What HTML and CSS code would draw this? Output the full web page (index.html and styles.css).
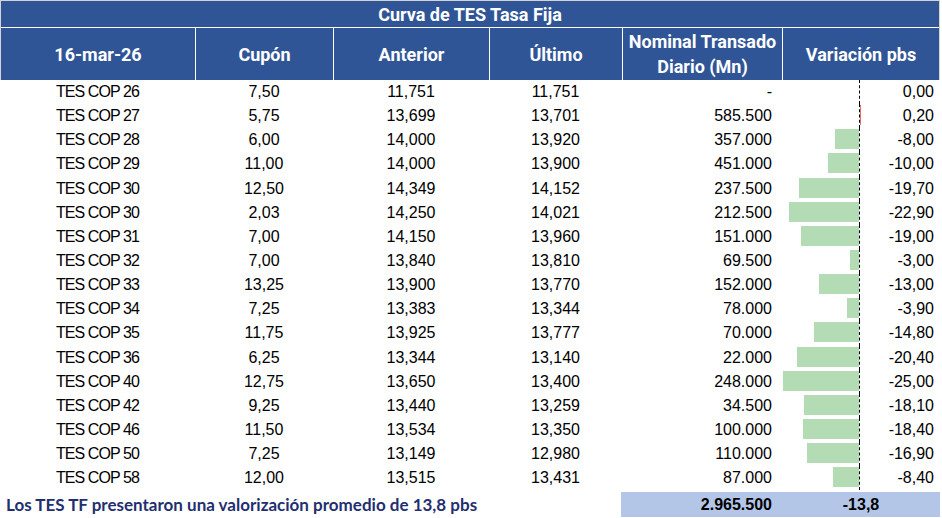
FILE: index.html
```html
<!DOCTYPE html>
<html lang="es">
<head>
<meta charset="utf-8">
<title>Curva de TES Tasa Fija</title>
<link rel="stylesheet" href="styles.css">
</head>
<body>
<div class="sheet">
  <div class="head-box">
    <div class="title">Curva de TES Tasa Fija</div>
    <div class="head">
      <div class="h">16-mar-26</div>
      <div class="h">Cupón</div>
      <div class="h">Anterior</div>
      <div class="h">Último</div>
      <div class="h two">Nominal Transado<br>Diario (Mn)</div>
      <div class="h">Variación pbs</div>
    </div>
  </div>
  <div class="rows">
    <div class="row"><div class="c name">TES COP 26</div><div class="c">7,50</div><div class="c">11,751</div><div class="c">11,751</div><div class="c num">-</div><div class="c var"><div class="neg"></div><div class="pos"></div><span class="v">0,00</span></div></div>
    <div class="row"><div class="c name">TES COP 27</div><div class="c">5,75</div><div class="c">13,699</div><div class="c">13,701</div><div class="c num">585.500</div><div class="c var"><div class="neg"></div><div class="pos"><div class="bar up" style="width:1px"></div></div><span class="v">0,20</span></div></div>
    <div class="row"><div class="c name">TES COP 28</div><div class="c">6,00</div><div class="c">14,000</div><div class="c">13,920</div><div class="c num">357.000</div><div class="c var"><div class="neg"><div class="bar" style="width:24px"></div></div><div class="pos"></div><span class="v">-8,00</span></div></div>
    <div class="row"><div class="c name">TES COP 29</div><div class="c">11,00</div><div class="c">14,000</div><div class="c">13,900</div><div class="c num">451.000</div><div class="c var"><div class="neg"><div class="bar" style="width:31px"></div></div><div class="pos"></div><span class="v">-10,00</span></div></div>
    <div class="row"><div class="c name">TES COP 30</div><div class="c">12,50</div><div class="c">14,349</div><div class="c">14,152</div><div class="c num">237.500</div><div class="c var"><div class="neg"><div class="bar" style="width:60px"></div></div><div class="pos"></div><span class="v">-19,70</span></div></div>
    <div class="row"><div class="c name">TES COP 30</div><div class="c">2,03</div><div class="c">14,250</div><div class="c">14,021</div><div class="c num">212.500</div><div class="c var"><div class="neg"><div class="bar" style="width:70px"></div></div><div class="pos"></div><span class="v">-22,90</span></div></div>
    <div class="row"><div class="c name">TES COP 31</div><div class="c">7,00</div><div class="c">14,150</div><div class="c">13,960</div><div class="c num">151.000</div><div class="c var"><div class="neg"><div class="bar" style="width:58px"></div></div><div class="pos"></div><span class="v">-19,00</span></div></div>
    <div class="row"><div class="c name">TES COP 32</div><div class="c">7,00</div><div class="c">13,840</div><div class="c">13,810</div><div class="c num">69.500</div><div class="c var"><div class="neg"><div class="bar" style="width:9px"></div></div><div class="pos"></div><span class="v">-3,00</span></div></div>
    <div class="row"><div class="c name">TES COP 33</div><div class="c">13,25</div><div class="c">13,900</div><div class="c">13,770</div><div class="c num">152.000</div><div class="c var"><div class="neg"><div class="bar" style="width:40px"></div></div><div class="pos"></div><span class="v">-13,00</span></div></div>
    <div class="row"><div class="c name">TES COP 34</div><div class="c">7,25</div><div class="c">13,383</div><div class="c">13,344</div><div class="c num">78.000</div><div class="c var"><div class="neg"><div class="bar" style="width:12px"></div></div><div class="pos"></div><span class="v">-3,90</span></div></div>
    <div class="row"><div class="c name">TES COP 35</div><div class="c">11,75</div><div class="c">13,925</div><div class="c">13,777</div><div class="c num">70.000</div><div class="c var"><div class="neg"><div class="bar" style="width:45px"></div></div><div class="pos"></div><span class="v">-14,80</span></div></div>
    <div class="row"><div class="c name">TES COP 36</div><div class="c">6,25</div><div class="c">13,344</div><div class="c">13,140</div><div class="c num">22.000</div><div class="c var"><div class="neg"><div class="bar" style="width:62px"></div></div><div class="pos"></div><span class="v">-20,40</span></div></div>
    <div class="row"><div class="c name">TES COP 40</div><div class="c">12,75</div><div class="c">13,650</div><div class="c">13,400</div><div class="c num">248.000</div><div class="c var"><div class="neg"><div class="bar" style="width:76px"></div></div><div class="pos"></div><span class="v">-25,00</span></div></div>
    <div class="row"><div class="c name">TES COP 42</div><div class="c">9,25</div><div class="c">13,440</div><div class="c">13,259</div><div class="c num">34.500</div><div class="c var"><div class="neg"><div class="bar" style="width:55px"></div></div><div class="pos"></div><span class="v">-18,10</span></div></div>
    <div class="row"><div class="c name">TES COP 46</div><div class="c">11,50</div><div class="c">13,534</div><div class="c">13,350</div><div class="c num">100.000</div><div class="c var"><div class="neg"><div class="bar" style="width:56px"></div></div><div class="pos"></div><span class="v">-18,40</span></div></div>
    <div class="row"><div class="c name">TES COP 50</div><div class="c">7,25</div><div class="c">13,149</div><div class="c">12,980</div><div class="c num">110.000</div><div class="c var"><div class="neg"><div class="bar" style="width:52px"></div></div><div class="pos"></div><span class="v">-16,90</span></div></div>
    <div class="row"><div class="c name">TES COP 58</div><div class="c">12,00</div><div class="c">13,515</div><div class="c">13,431</div><div class="c num">87.000</div><div class="c var"><div class="neg"><div class="bar" style="width:26px"></div></div><div class="pos"></div><span class="v">-8,40</span></div></div>
  </div>
  <div class="foot">
    <div class="note">Los TES TF presentaron una valorización promedio de 13,8 pbs</div>
    <div class="tot num">2.965.500</div>
    <div class="tot avg">-13,8</div>
  </div>
</div>
</body>
</html>
```
FILE: styles.css
```css
* { box-sizing: border-box; }
html, body { margin: 0; padding: 0; background: #ffffff; }
body { font-family: "Liberation Sans", Arial, sans-serif; color: #000; }

.sheet { width: 942px; }

.head-box {
  width: 940px;
  border: 1px solid #d4d4d4;
  border-bottom: 0;
  background: #ffffff;
}
.title {
  height: 26px;
  background: #2f5597;
  color: #ffffff;
  font-family: "Roboto", "Liberation Sans", sans-serif;
  font-weight: 700;
  font-size: 18px;
  display: flex;
  align-items: center;
  justify-content: center;
  margin-bottom: 1px;
}
.head {
  display: grid;
  grid-template-columns: 194px 137px 155px 132px 159px 156px;
  column-gap: 1px;
  background: #ffffff;
  height: 52px;
}
.h {
  background: #2f5597;
  color: #ffffff;
  font-family: "Roboto", "Liberation Sans", sans-serif;
  font-weight: 700;
  font-size: 18px;
  display: flex;
  align-items: center;
  justify-content: center;
  text-align: center;
}
.h.two { line-height: 25px; }

.rows { width: 940px; }
.row {
  display: grid;
  grid-template-columns: 195px 138px 156px 133px 160px 158px;
  height: 24.15px;
  font-size: 16px;
}
.c {
  display: flex;
  align-items: center;
  justify-content: center;
  white-space: nowrap;
}
.c.name { letter-spacing: -0.9px; }
.c.num { justify-content: flex-end; padding-right: 10px; }
.c.var { justify-content: flex-start; align-items: stretch; }
.neg {
  width: 78px;
  display: flex;
  justify-content: flex-end;
  align-items: flex-start;
  padding-top: 1px;
  border-right: 1px dashed #000;
}
.pos {
  width: 2px;
  display: flex;
  align-items: flex-start;
  padding-top: 1px;
}
.bar { height: 20px; background: #b3dbb4; }
.bar.up { background: #f06a6a; }
.v {
  flex: 1;
  display: flex;
  align-items: center;
  justify-content: flex-end;
  padding-right: 6px;
}

.foot {
  display: grid;
  grid-template-columns: 622px 160px 158px;
  width: 940px;
  height: 27px;
  padding-top: 2px;
}
.note {
  font-family: "Lato", "Liberation Sans", sans-serif;
  font-weight: 700;
  font-size: 17px;
  color: #1f2f6f;
  display: flex;
  align-items: center;
  padding-left: 6px;
}
.tot {
  background: #b4c6e7;
  font-weight: 700;
  font-size: 16px;
  display: flex;
  align-items: center;
}
.tot.num { justify-content: flex-end; padding-right: 10px; margin-left: -1px; }
.tot.avg { justify-content: center; }
```
